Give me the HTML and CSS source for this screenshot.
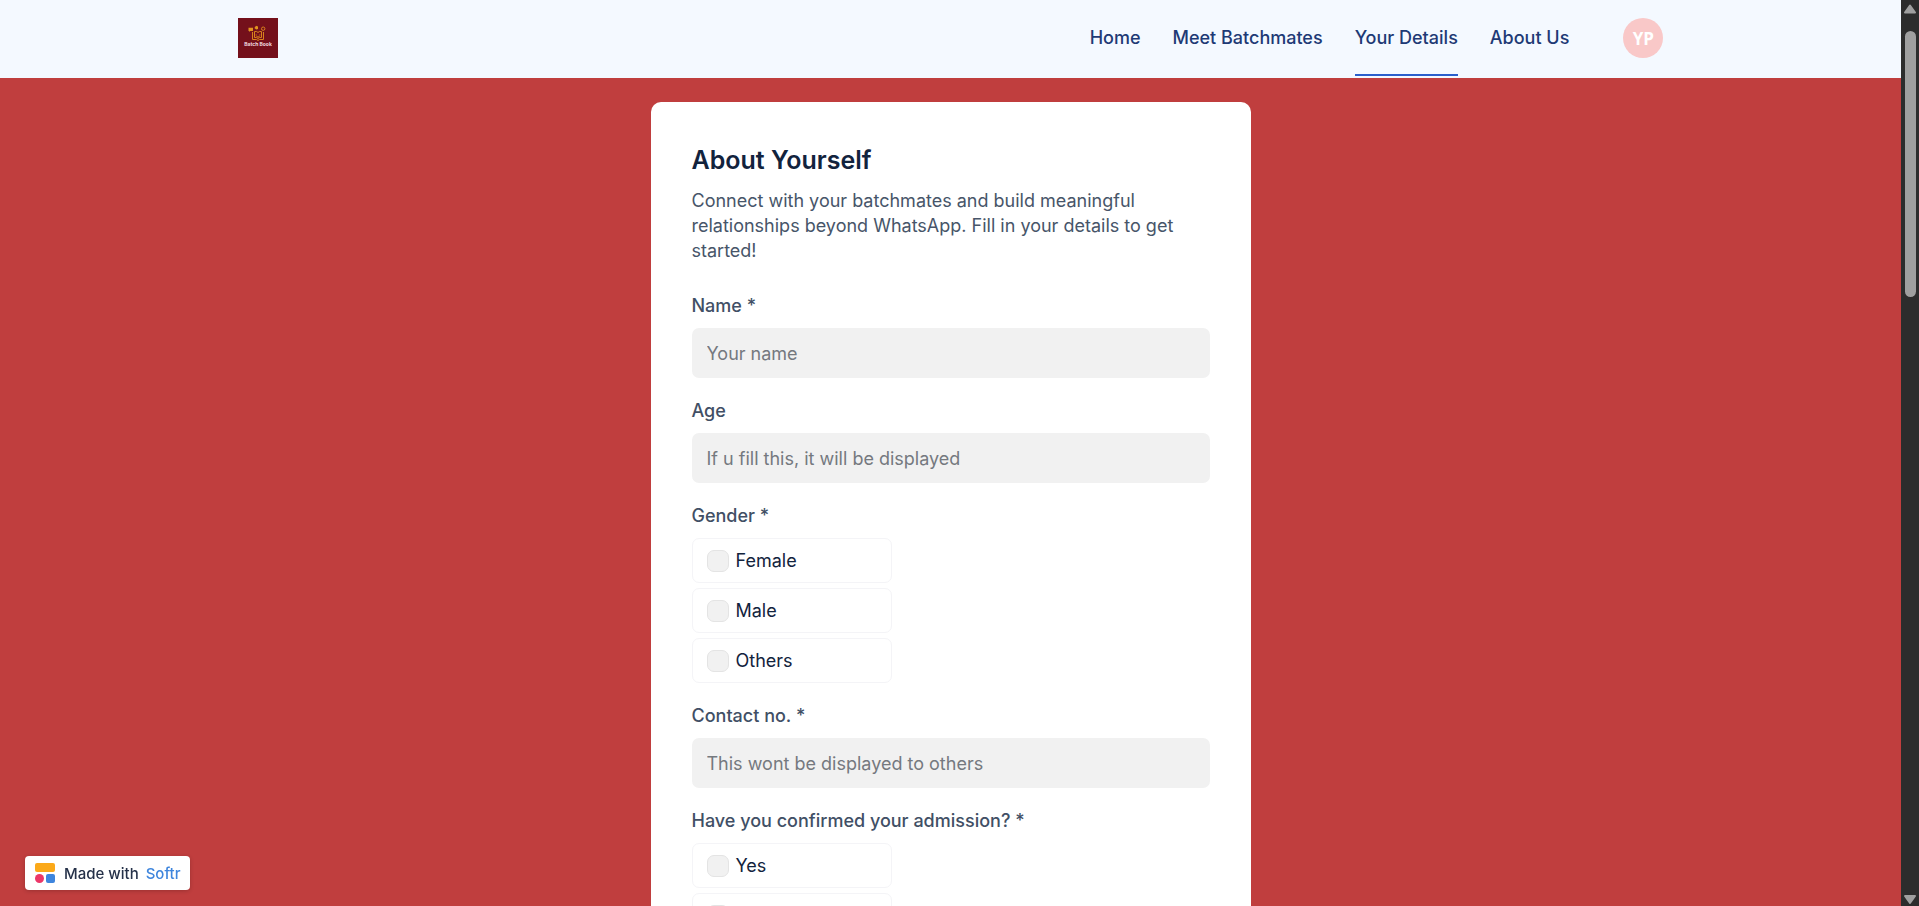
FILE: index.html
```html
<!DOCTYPE html>
<html lang="en">
<head>
<meta charset="utf-8">
<meta name="viewport" content="width=device-width, initial-scale=1">
<title>Batch Book – Your Details</title>
<link rel="stylesheet" href="styles.css">
</head>
<body>
<div class="page">
  <header class="header">
    <div class="header-inner">
      <a class="logo" href="#" aria-label="Batch Book">
        <svg viewBox="0 0 40 40" width="40" height="40">
          <rect width="40" height="40" fill="#74101b"/>
          <g fill="none" stroke="#d9821c" stroke-width="1">
            <path d="M14.5 14v7.500h4l1.500 1 1.500-1h4V14"/>
            <path d="M16.500 13.500q2.500-.5 3.500 1 1-1.500 3.500-1v6q-2.500-.3-3.500 1-1-1.300-3.500-1z"/>
            <path d="M18.200 16.500v1M21.800 16.500v1M18.500 18.500q1.500 1 3 0"/>
            <circle cx="25.200" cy="10.700" r="1.700"/>
          </g>
          <g fill="#e2941f">
            <path d="M10.500 9.700h4.500v3.300h-3l-1 1v-1h-.5zM18 7.800l2 .7V11l-1.800.6-1.800-1.600z"/>
          </g>
          <text class="logo-text" x="20" y="28" text-anchor="middle">Batch Book</text>
        </svg>
      </a>
      <nav class="nav">
        <a class="nav-link" href="#">Home</a>
        <a class="nav-link" href="#">Meet Batchmates</a>
        <a class="nav-link nav-link-active" href="#" aria-current="page">Your Details</a>
        <a class="nav-link" href="#">About Us</a>
      </nav>
      <button class="avatar" type="button">YP</button>
    </div>
  </header>
  <main class="main">
    <form class="card">
      <h1 class="title">About Yourself</h1>
      <p class="intro">Connect with your batchmates and build meaningful relationships beyond WhatsApp. Fill in your details to get started!</p>
      <div class="field">
        <label class="label" for="name">Name *</label>
        <input class="input" id="name" type="text" placeholder="Your name">
      </div>
      <div class="field">
        <label class="label" for="age">Age</label>
        <input class="input" id="age" type="text" placeholder="If u fill this, it will be displayed">
      </div>
      <fieldset class="field">
        <legend class="label">Gender *</legend>
        <div class="options">
          <label class="option"><input class="check" type="checkbox">Female</label>
          <label class="option"><input class="check" type="checkbox">Male</label>
          <label class="option"><input class="check" type="checkbox">Others</label>
        </div>
      </fieldset>
      <div class="field">
        <label class="label" for="contact">Contact no. *</label>
        <input class="input" id="contact" type="tel" placeholder="This wont be displayed to others">
      </div>
      <fieldset class="field">
        <legend class="label">Have you confirmed your admission? *</legend>
        <div class="options">
          <label class="option"><input class="check" type="checkbox">Yes</label>
          <label class="option"><input class="check" type="checkbox" aria-label="No"></label>
        </div>
      </fieldset>
    </form>
  </main>
</div>
<div class="scrollbar" aria-hidden="true">
  <svg class="arrow" viewBox="0 0 18 18" width="18" height="18"><path d="M9 5.500 14 12.500H4z"/></svg>
  <div class="track"><div class="thumb"></div></div>
  <svg class="arrow" viewBox="0 0 18 18" width="18" height="18"><path d="M4 8h10L9 15z"/></svg>
</div>
<a class="badge" href="#">
  <svg viewBox="0 0 20 20" width="20" height="20">
    <rect width="20" height="9" rx="2" fill="#fba919"/>
    <circle cx="4.500" cy="15.500" r="4.500" fill="#ec3668"/>
    <rect x="11" y="11" width="9" height="9" rx="2" fill="#3e85dd"/>
  </svg>
  <span class="badge-text">Made with <span class="brand">Softr</span></span>
</a>
</body>
</html>
```
FILE: styles.css
```css
* {
  box-sizing: border-box;
}

body {
  margin: 0;
  display: flex;
  height: 100vh;
  overflow: hidden;
  background: #c03e3e;
  font-family: Inter, "Liberation Sans", sans-serif;
  font-size: 18px;
  line-height: 25px;
}

.page {
  flex: 1;
  min-width: 0;
  overflow: hidden;
}

.header {
  padding-bottom: 2px;
  background: #f4f9ff;
}

.header-inner {
  display: flex;
  align-items: center;
  width: 75%;
  height: 76px;
  margin: 0 auto;
}

.logo,
.logo svg,
.badge svg {
  display: block;
}

.logo-text {
  font-size: 5px;
  font-weight: 700;
  fill: #f3dfe0;
}

.nav {
  display: flex;
  align-self: stretch;
  gap: 32px;
  margin-left: auto;
}

.nav-link {
  display: flex;
  align-items: center;
  border-bottom: 2px solid transparent;
  color: #1e3a75;
  font-weight: 500;
  text-decoration: none;
}

.nav-link-active {
  border-bottom-color: #2a5fcc;
}

.avatar {
  width: 40px;
  height: 40px;
  margin-left: 54px;
  padding: 0;
  border: 0;
  border-radius: 50%;
  background: #f9c8c8;
  color: #fff;
  font: 700 17px "Open Sans", sans-serif;
}

.main {
  padding: 24px 20px;
}

.card {
  display: flex;
  flex-direction: column;
  gap: 20px;
  max-width: 600px;
  margin: 0 auto;
  padding: 41px;
  border-radius: 10px;
  background: #fff;
}

.title {
  margin: 0 0 -10px;
  color: #12233d;
  font-size: 25px;
  font-weight: 600;
  line-height: 35px;
}

.intro {
  margin: 0 0 10px;
  color: #475569;
}

.field {
  margin: 0;
  padding: 0;
  border: 0;
  min-width: 0;
}

.label {
  display: block;
  margin-bottom: 10px;
  padding: 0;
  color: #414f65;
  font-weight: 500;
}

.input {
  display: block;
  width: 100%;
  height: 50px;
  padding: 0 15px;
  border: 0;
  border-radius: 7px;
  background: #f1f1f1;
  color: #12233d;
  font: inherit;
}

.input::placeholder {
  color: #75797f;
  opacity: 1;
}

.options {
  display: flex;
  flex-direction: column;
  gap: 5px;
}

.option {
  display: flex;
  align-items: center;
  gap: 7px;
  width: 200px;
  height: 45px;
  padding: 0 14px;
  border: 1px solid #f4f4f7;
  border-radius: 7px;
  color: #12233d;
}

.check {
  appearance: none;
  width: 22px;
  height: 22px;
  margin: 0;
  border: 1px solid #e4e4e4;
  border-radius: 7px;
  background: #f1f1f1;
}

.scrollbar {
  display: flex;
  flex-direction: column;
  width: 18px;
  background: #2c2c2c;
}

.arrow {
  fill: #9f9f9f;
  stroke: #9f9f9f;
  stroke-width: 2;
  stroke-linejoin: round;
}

.track {
  flex: 1;
  padding: 13px 3px 0 4px;
}

.thumb {
  height: 31%;
  border-radius: 6px;
  background: #9f9f9f;
}

.badge {
  position: fixed;
  left: 25px;
  bottom: 16px;
  display: flex;
  align-items: center;
  gap: 9px;
  height: 34px;
  padding: 0 10px;
  border-radius: 4px;
  background: #fff;
  box-shadow: 0 1px 4px rgb(0 0 0 / 20%);
  color: #253149;
  font-size: 15px;
  font-weight: 500;
  text-decoration: none;
}

.brand {
  margin-left: 3px;
  color: #3e85dd;
}
```
